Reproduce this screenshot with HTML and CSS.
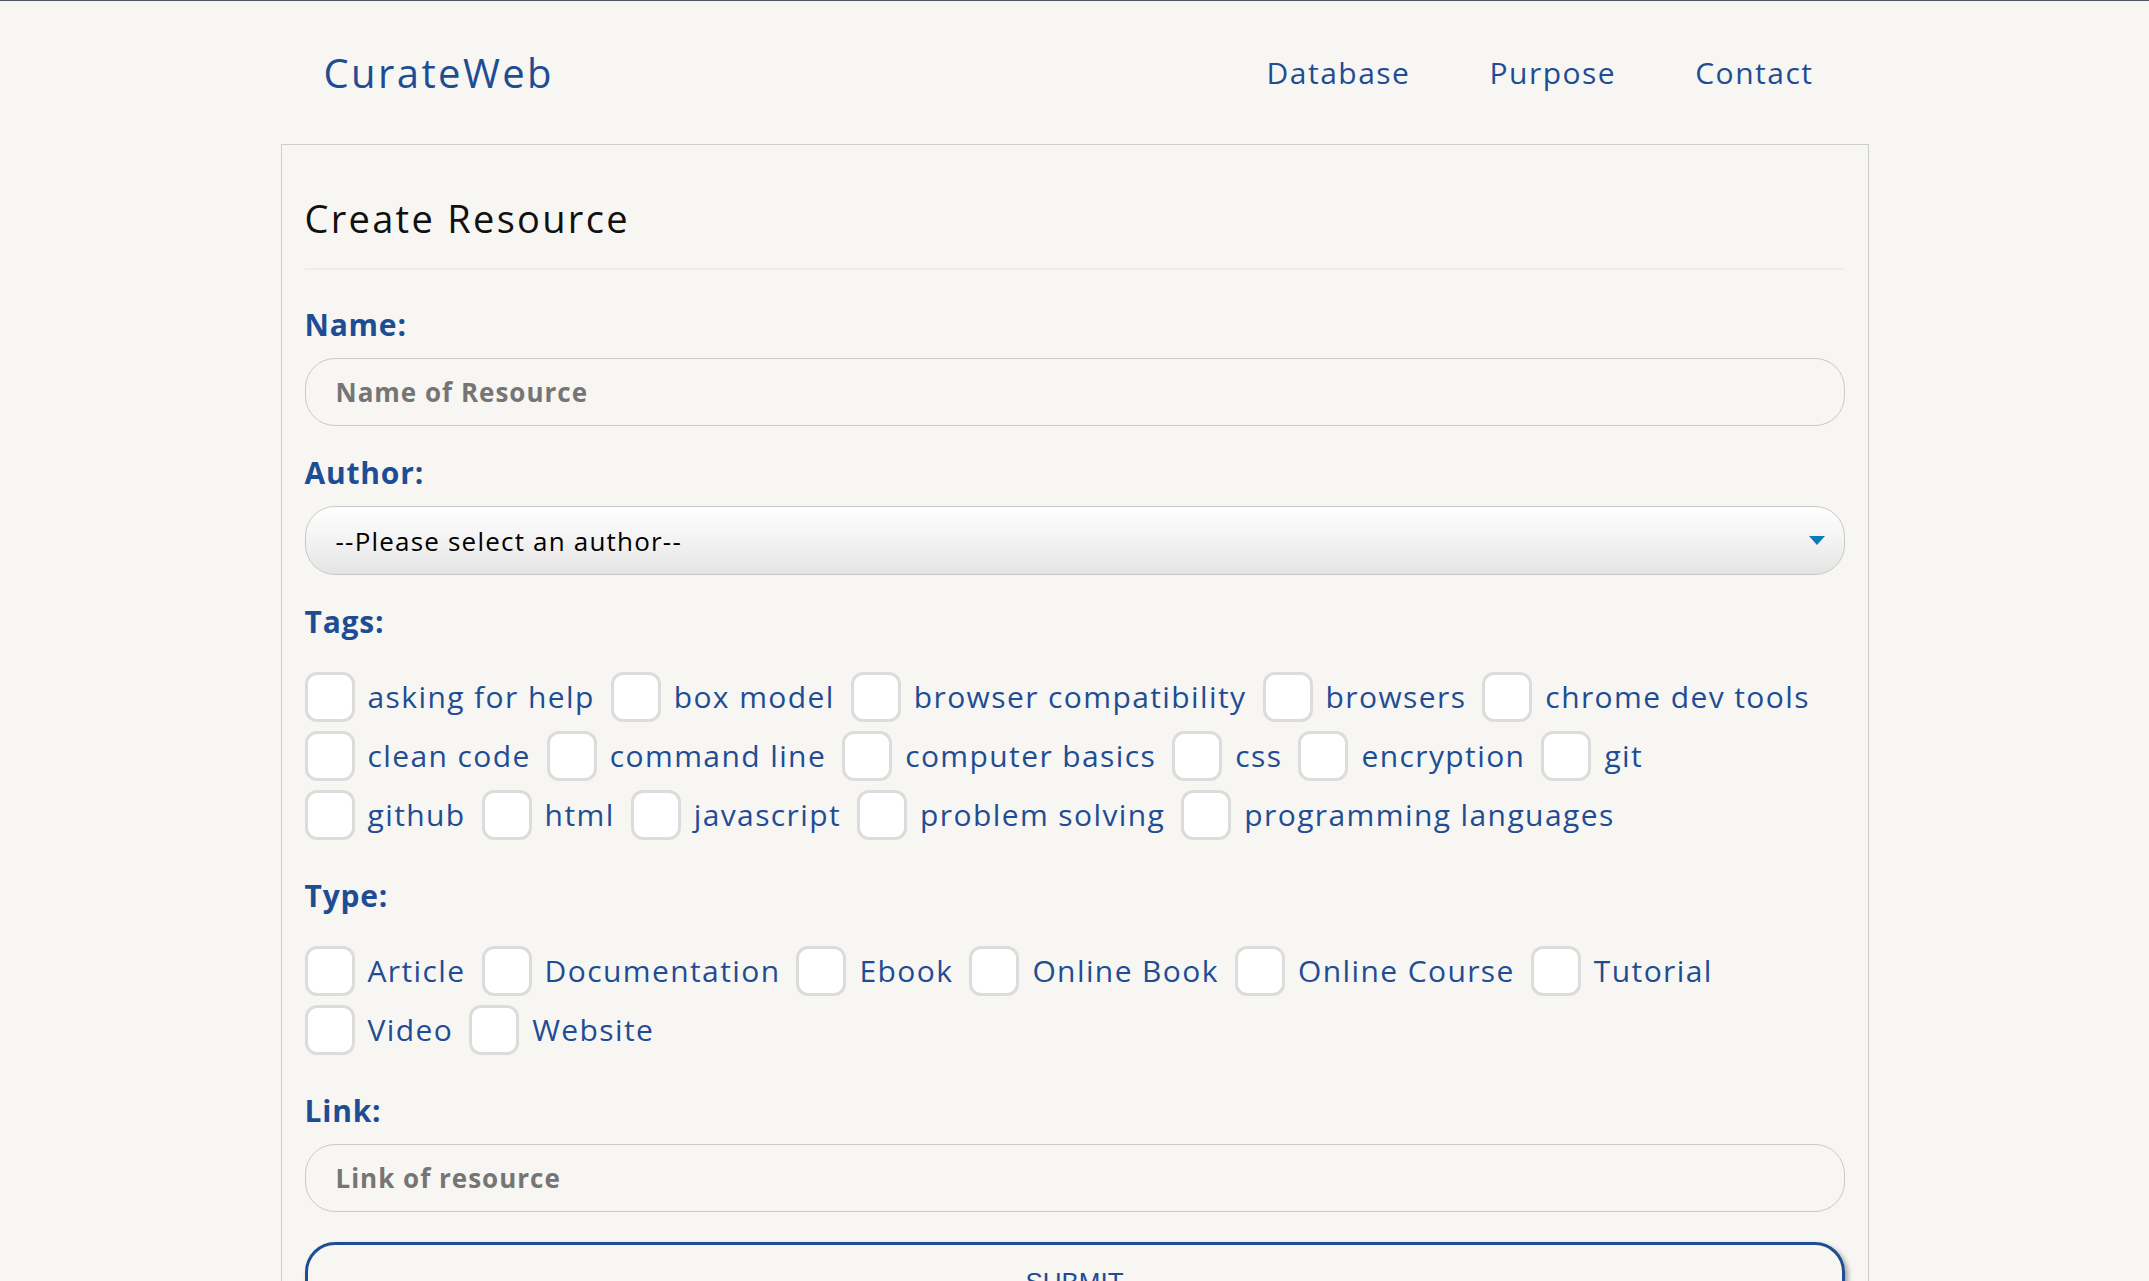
FILE: index.html
```html
<!DOCTYPE html>
<html lang="en">
<head>
<meta charset="utf-8">
<title>CurateWeb - Create Resource</title>
<link rel="stylesheet" href="styles.css">
</head>
<body>
<div class="page">
  <header class="site-header">
    <a class="logo" href="#">CurateWeb</a>
    <nav class="nav">
      <a href="#">Database</a>
      <a href="#">Purpose</a>
      <a href="#">Contact</a>
    </nav>
  </header>

  <main class="card">
    <h1 class="title">Create Resource</h1>
    <hr class="divider">

    <form class="form">
      <div class="field">
        <label class="field-label" for="name">Name:</label>
        <input class="text-input" id="name" type="text" placeholder="Name of Resource">
      </div>

      <div class="field">
        <label class="field-label" for="author">Author:</label>
        <div class="select-wrap">
          <select class="select" id="author">
            <option>--Please select an author--</option>
          </select>
          <span class="select-arrow"></span>
        </div>
      </div>

      <div class="field">
        <div class="field-label">Tags:</div>
        <div class="checks">
          <div class="check-row">
            <label class="check"><input type="checkbox"><span>asking for help</span></label>
            <label class="check"><input type="checkbox"><span>box model</span></label>
            <label class="check"><input type="checkbox"><span>browser compatibility</span></label>
            <label class="check"><input type="checkbox"><span>browsers</span></label>
            <label class="check"><input type="checkbox"><span>chrome dev tools</span></label>
          </div>
          <div class="check-row">
            <label class="check"><input type="checkbox"><span>clean code</span></label>
            <label class="check"><input type="checkbox"><span>command line</span></label>
            <label class="check"><input type="checkbox"><span>computer basics</span></label>
            <label class="check"><input type="checkbox"><span>css</span></label>
            <label class="check"><input type="checkbox"><span>encryption</span></label>
            <label class="check"><input type="checkbox"><span>git</span></label>
          </div>
          <div class="check-row">
            <label class="check"><input type="checkbox"><span>github</span></label>
            <label class="check"><input type="checkbox"><span>html</span></label>
            <label class="check"><input type="checkbox"><span>javascript</span></label>
            <label class="check"><input type="checkbox"><span>problem solving</span></label>
            <label class="check"><input type="checkbox"><span>programming languages</span></label>
          </div>
        </div>
      </div>

      <div class="field">
        <div class="field-label">Type:</div>
        <div class="checks">
          <div class="check-row">
            <label class="check"><input type="checkbox"><span>Article</span></label>
            <label class="check"><input type="checkbox"><span>Documentation</span></label>
            <label class="check"><input type="checkbox"><span>Ebook</span></label>
            <label class="check"><input type="checkbox"><span>Online Book</span></label>
            <label class="check"><input type="checkbox"><span>Online Course</span></label>
            <label class="check"><input type="checkbox"><span>Tutorial</span></label>
          </div>
          <div class="check-row">
            <label class="check"><input type="checkbox"><span>Video</span></label>
            <label class="check"><input type="checkbox"><span>Website</span></label>
          </div>
        </div>
      </div>

      <div class="field field-last">
        <label class="field-label" for="link">Link:</label>
        <input class="text-input" id="link" type="text" placeholder="Link of resource">
      </div>

      <button class="submit" type="submit">SUBMIT</button>
    </form>
  </main>
</div>
</body>
</html>
```

FILE: styles.css
```css
* {
  box-sizing: border-box;
}

html, body {
  margin: 0;
  padding: 0;
}

body {
  background: #f7f6f2;
  border-top: 1px solid #50565e;
  font-family: "Open Sans", "Noto Sans", sans-serif;
  color: #1f4d94;
}

.page {
  width: 1588px;
  margin: 0 auto;
}

.site-header {
  height: 143px;
  display: flex;
  align-items: center;
  justify-content: space-between;
  padding: 0 55px 0 43px;
}

.logo {
  font-size: 40px;
  font-weight: 500;
  letter-spacing: 2.4px;
  line-height: 50px;
  color: #1f4d94;
  text-decoration: none;
}

.nav {
  display: flex;
  gap: 79px;
}

.nav a {
  font-size: 30px;
  font-weight: 400;
  letter-spacing: 1.5px;
  line-height: 40px;
  color: #1f4d94;
  text-decoration: none;
}

.card {
  border: 1px solid #cdcdcd;
  border-bottom: none;
  padding: 48px 23px 40px;
}

.title {
  margin: 0;
  font-size: 38px;
  font-weight: 500;
  letter-spacing: 2.3px;
  line-height: 50px;
  color: #111;
}

.divider {
  margin: 25px 0 35px;
  border: none;
  height: 2px;
  background: #eeede8;
}

.form {
  display: flex;
  flex-direction: column;
}

.field {
  display: flex;
  flex-direction: column;
  margin-bottom: 27px;
}

.field-last {
  margin-bottom: 30px;
}

.field-label {
  font-size: 30px;
  font-weight: 700;
  letter-spacing: 0.8px;
  line-height: 40px;
  color: #1f4d94;
  margin-bottom: 13px;
}

.text-input {
  height: 68px;
  width: 100%;
  border: 1px solid #c9c9c9;
  border-radius: 30px;
  background: transparent;
  padding: 0 30px;
  font-family: "Open Sans", "Noto Sans", sans-serif;
  font-size: 26px;
  font-weight: 700;
  letter-spacing: 1px;
  color: #333;
  outline: none;
}

.text-input::placeholder {
  color: #757575;
  opacity: 1;
}

.select-wrap {
  position: relative;
}

.select {
  appearance: none;
  -webkit-appearance: none;
  width: 100%;
  height: 69px;
  border: 1px solid #c9c9c9;
  border-radius: 30px;
  background: linear-gradient(to bottom, #ffffff 0%, #f4f4f4 45%, #e4e4e4 100%);
  padding: 0 60px 0 30px;
  font-family: "Open Sans", "Noto Sans", sans-serif;
  font-size: 26px;
  font-weight: 400;
  letter-spacing: 1.2px;
  color: #000;
  outline: none;
}

.select-arrow {
  position: absolute;
  right: 20px;
  top: 30px;
  width: 0;
  height: 0;
  border-left: 8.5px solid transparent;
  border-right: 8.5px solid transparent;
  border-top: 9px solid #0c79b9;
  pointer-events: none;
}

.checks {
  display: flex;
  flex-direction: column;
  gap: 9px;
  padding: 17px 0 9px;
}

.check-row {
  display: flex;
  align-items: center;
}

.check {
  display: flex;
  align-items: center;
  margin-right: 16px;
  font-size: 30px;
  font-weight: 400;
  letter-spacing: 1.4px;
  line-height: 50px;
  color: #1f4d94;
  white-space: nowrap;
}

.check input {
  appearance: none;
  -webkit-appearance: none;
  margin: 0 13px 0 0;
  width: 50px;
  height: 50px;
  border: 3px solid #dcdcdc;
  border-radius: 12px;
  background: #fff;
  flex: none;
}

.submit {
  width: 100%;
  border: 3px solid #1f4d94;
  border-radius: 30px;
  background: transparent;
  box-shadow: 3px 3px 5px rgba(0, 0, 0, 0.35);
  padding: 22px 0;
  font-family: "Liberation Sans", Arial, sans-serif;
  font-size: 26px;
  line-height: 30px;
  color: #1f4d94;
  cursor: pointer;
}
```
